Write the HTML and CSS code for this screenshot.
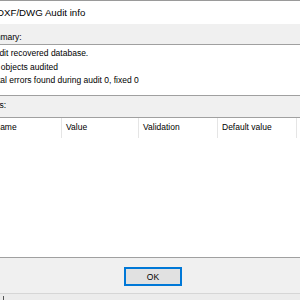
FILE: index.html
```html
<!DOCTYPE html>
<html lang="en">
<head>
  <meta charset="UTF-8">
  <title>DXF/DWG Audit info</title>
  <link rel="stylesheet" href="styles.css">
</head>
<body>

  <div class="dialogo">
    <div class="titulo">DXF/DWG Audit info</div>

    <div class="etiqueta etiqueta-resumen">Summary:</div>
    <div class="resumen">
      <div class="linea">Audit recovered database.</div>
      <div class="linea">12 objects audited</div>
      <div class="linea">Total errors found during audit 0, fixed 0</div>
    </div>

    <div class="etiqueta etiqueta-items">Items:</div>
    <div class="tabla">
      <div class="cabecera">
        <div class="col col-nombre">Name</div>
        <div class="col col-valor">Value</div>
        <div class="col col-validacion">Validation</div>
        <div class="col col-defecto">Default value</div>
      </div>
    </div>

    <div class="pie">
      <button class="boton">OK</button>
    </div>
    <div class="borde-inferior">
      <div class="marca"></div>
    </div>
  </div>

</body>
</html>
```

FILE: styles.css
```css
body {
  margin: 0;
  width: 300px;
  height: 300px;
  overflow: hidden;
  font-family: "Liberation Sans", Arial, sans-serif;
  font-size: 8.5px;
  color: #000;
  background-color: #fff;
}

.dialogo {
  display: flex;
  flex-direction: column;
  height: 300px;
}

.titulo {
  height: 23px;
  border-top: 1px solid #9a9a9a;
  background-color: #fff;
  font-size: 9.7px;
  line-height: 23px;
  margin-left: -3px;
  white-space: nowrap;
}

.etiqueta {
  background-color: #f0f0f0;
  margin-left: -17px;
  white-space: nowrap;
}

.etiqueta-resumen {
  height: 20px;
  line-height: 26px;
  border-bottom: 1px solid #a0a0a0;
}

.resumen {
  height: 48px;
  padding-top: 2px;
  margin-left: -11px;
  border-bottom: 1px solid #a0a0a0;
}

.linea {
  height: 13.5px;
  line-height: 13.5px;
  white-space: nowrap;
}

.etiqueta-items {
  height: 21px;
  line-height: 19px;
  border-bottom: 1px solid #a0a0a0;
}

.tabla {
  flex: 1;
  background-color: #fff;
  border-bottom: 1px solid #a0a0a0;
}

.cabecera {
  display: flex;
  height: 20px;
  line-height: 19px;
  margin-left: -6px;
}

.col {
  border-right: 1px solid #e5e5e5;
  padding-left: 4px;
  box-sizing: border-box;
  white-space: nowrap;
}

.col-nombre {
  width: 68px;
  padding-left: 0;
}

.col-valor {
  width: 77px;
}

.col-validacion {
  width: 79px;
}

.col-defecto {
  width: 79px;
}

.pie {
  height: 35px;
  background-color: #f0f0f0;
  display: flex;
  justify-content: center;
  align-items: center;
  padding-left: 6px;
}

.boton {
  width: 58px;
  height: 19px;
  margin-top: 2px;
  padding: 0;
  border: 1px solid #0078d7;
  background-color: #e1e1e1;
  box-shadow: inset 0 0 0 1px #0078d7;
  font-family: "Liberation Sans", Arial, sans-serif;
  font-size: 8.5px;
  color: #000;
}

.borde-inferior {
  height: 6px;
  border-top: 1px solid #d6d6d6;
  background-color: #ececec;
  display: flex;
}

.marca {
  width: 1px;
  margin-left: 3px;
  margin-top: 2px;
  background-color: #555;
}
```
